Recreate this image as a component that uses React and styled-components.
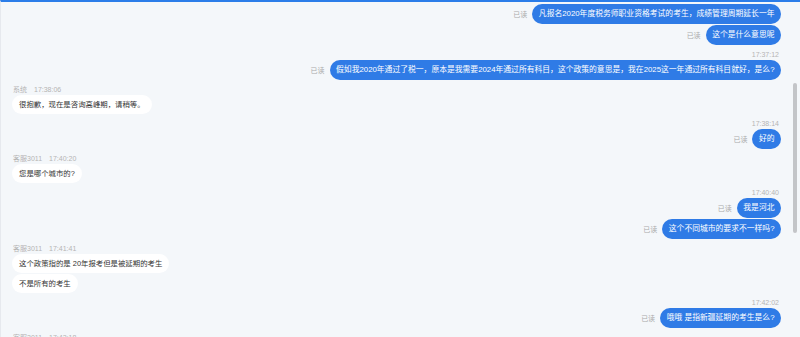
import React from "react";
import styled, { createGlobalStyle } from "styled-components";

const GlobalStyle = createGlobalStyle`
  html, body {
    margin: 0;
    padding: 0;
    background: #f4f7fa;
  }
  body {
    font-family: "Liberation Sans", "Noto Sans CJK SC", sans-serif;
  }
`;

const Chat = styled.div`
  position: relative;
  height: 337px;
  box-sizing: border-box;
  overflow: hidden;
  border-top: 2px solid #2b7de9;
  border-left: 1px solid #e6e9ee;
  padding: 2px 19px 0 11px;
  background: #f4f7fa;
  display: flex;
  flex-direction: column;
`;

const Group = styled.div`
  display: flex;
  flex-direction: column;
  align-items: ${(p) => (p.$mine ? "flex-end" : "flex-start")};
  margin-top: ${(p) => (p.$first ? "0" : "5px")};
`;

const Header = styled.div`
  display: flex;
  gap: 7px;
  height: 9px;
  line-height: 9px;
  font-size: 7px;
  color: #b4b4b4;
  margin-bottom: 1px;
  padding-right: ${(p) => (p.$mine ? "2px" : "0")};
  padding-left: ${(p) => (p.$mine ? "0" : "1px")};
`;

const Bubbles = styled.div`
  display: flex;
  flex-direction: column;
  align-items: inherit;
  gap: 1px;
`;

const Row = styled.div`
  display: flex;
  align-items: center;
  gap: 5px;
`;

const ReadMark = styled.span`
  font-size: 7px;
  color: #ababab;
`;

const Bubble = styled.div`
  box-sizing: border-box;
  height: ${(p) => (p.$mine ? "20px" : "19px")};
  line-height: ${(p) => (p.$mine ? "20px" : "19px")};
  padding: ${(p) => (p.$mine ? "0 6.5px" : "0 7px")};
  border-radius: 10px;
  font-size: ${(p) => (p.$mine ? "7.8px" : "7.4px")};
  white-space: nowrap;
  background: ${(p) => (p.$mine ? "#2f7be6" : "#ffffff")};
  color: ${(p) => (p.$mine ? "#ffffff" : "#333333")};
`;

const ScrollThumb = styled.div`
  position: absolute;
  right: 3px;
  top: 81px;
  width: 4px;
  height: 150px;
  border-radius: 2px;
  background: #c3c5c8;
`;

const groups = [
  {
    mine: true,
    texts: ["凡报名2020年度税务师职业资格考试的考生，成绩管理周期延长一年", "这个是什么意思呢"],
  },
  {
    mine: true,
    time: "17:37:12",
    texts: [
      "假如我2020年通过了税一，原本是我需要2024年通过所有科目，这个政策的意思是，我在2025这一年通过所有科目就好，是么?",
    ],
  },
  { mine: false, name: "系统", time: "17:38:06", texts: ["很抱歉，现在是咨询高峰期，请稍等。"] },
  { mine: true, time: "17:38:14", texts: ["好的"] },
  { mine: false, name: "客服3011", time: "17:40:20", texts: ["您是哪个城市的?"] },
  { mine: true, time: "17:40:40", texts: ["我是河北", "这个不同城市的要求不一样吗?"] },
  {
    mine: false,
    name: "客服3011",
    time: "17:41:41",
    texts: ["这个政策指的是 20年报考但是被延期的考生", "不是所有的考生"],
  },
  { mine: true, time: "17:42:02", texts: ["哦哦 是指新疆延期的考生是么?"] },
  { mine: false, name: "客服3011", time: "17:42:18", texts: ["好的"] },
];

const App = () => {
  return (
    <>
      <GlobalStyle />
      <Chat>
        {groups.map((g, i) => (
          <Group key={i} $mine={g.mine} $first={i === 0}>
            {g.time && (
              <Header $mine={g.mine}>
                {g.name && <span>{g.name}</span>}
                <span>{g.time}</span>
              </Header>
            )}
            <Bubbles>
              {g.texts.map((t, j) =>
                g.mine ? (
                  <Row key={j}>
                    <ReadMark>已读</ReadMark>
                    <Bubble $mine>{t}</Bubble>
                  </Row>
                ) : (
                  <Bubble key={j}>{t}</Bubble>
                )
              )}
            </Bubbles>
          </Group>
        ))}
        <ScrollThumb />
      </Chat>
    </>
  );
};

export default App;
